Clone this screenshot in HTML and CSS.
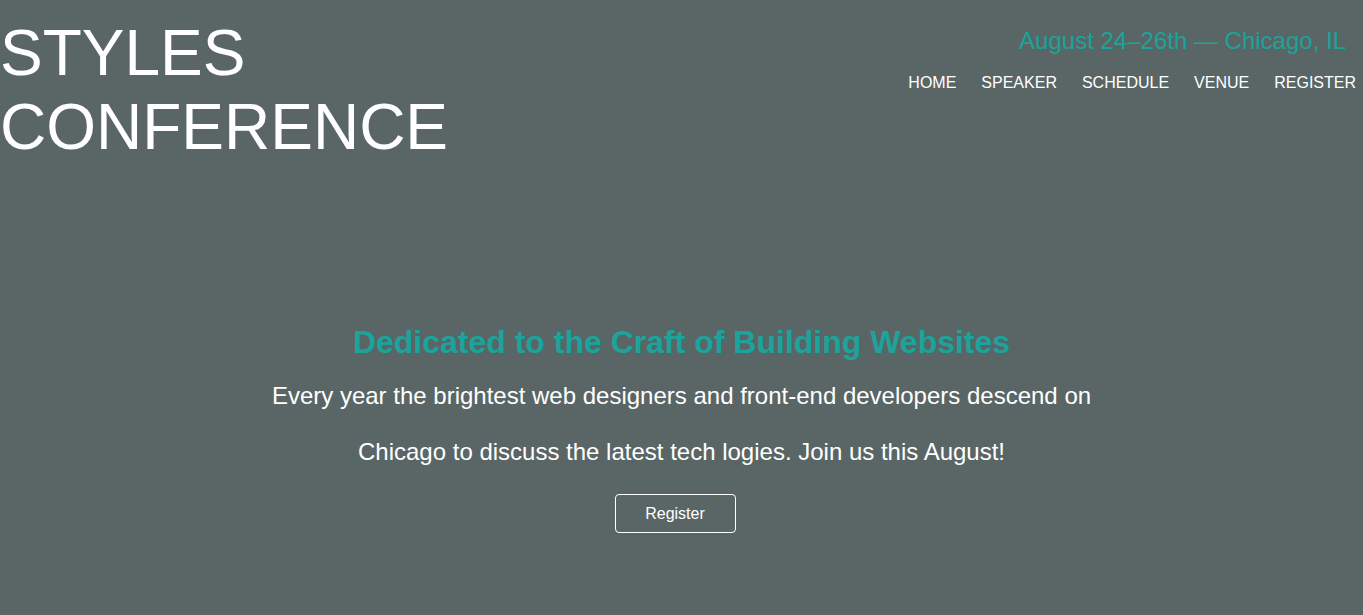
FILE: index.html
```html
<!DOCTYPE html>
<html lang="en">
<head>
<meta charset="utf-8">
<title>Styles Conference</title>
<link rel="stylesheet" href="styles.css">
</head>
<body>
<header class="site-header">
  <h1 class="logo">STYLES<br>CONFERENCE</h1>
  <div class="header-right">
    <p class="tagline">August 24&ndash;26th &mdash; Chicago, IL</p>
    <nav class="nav">
      <a href="#">HOME</a>
      <a href="#">SPEAKER</a>
      <a href="#">SCHEDULE</a>
      <a href="#">VENUE</a>
      <a href="#">REGISTER</a>
    </nav>
  </div>
</header>
<section class="hero">
  <h2 class="hero-title">Dedicated to the Craft of Building Websites</h2>
  <p class="hero-text">Every year the brightest web designers and front-end developers descend on<br>Chicago to discuss the latest tech logies. Join us this August!</p>
  <a class="btn" href="#">Register</a>
</section>
</body>
</html>
```
FILE: styles.css
```css
html, body {
  margin: 0;
  padding: 0;
}
body {
  background: #596665;
  color: #fff;
  font-family: "Liberation Sans", Arial, sans-serif;
  min-height: 615px;
}
.site-header {
  display: flex;
  justify-content: space-between;
  align-items: flex-start;
  padding: 16px 7px 0 0;
}
.logo {
  margin: 0;
  font-size: 64px;
  font-weight: normal;
  line-height: 74px;
}
.header-right {
  display: flex;
  flex-direction: column;
  align-items: flex-end;
}
.tagline {
  margin: 11px 10px 0 0;
  color: #1ba39c;
  font-size: 24px;
  line-height: 28px;
}
.nav {
  display: flex;
  gap: 25px;
  margin-top: 19px;
}
.nav a {
  color: #fff;
  text-decoration: none;
  font-size: 16px;
  line-height: 18px;
}
.hero {
  text-align: center;
  padding-top: 159px;
}
.hero-title {
  margin: 0;
  color: #1ba39c;
  font-size: 32px;
  line-height: 38px;
  font-weight: bold;
}
.hero-text {
  margin: 7px 0 0;
  font-size: 24px;
  line-height: 56px;
}
.btn {
  display: inline-block;
  margin-top: 14px;
  margin-right: 13px;
  width: 119px;
  height: 37px;
  line-height: 37px;
  border: 1px solid #fff;
  border-radius: 4px;
  color: #fff;
  text-decoration: none;
  font-size: 16px;
}
```
